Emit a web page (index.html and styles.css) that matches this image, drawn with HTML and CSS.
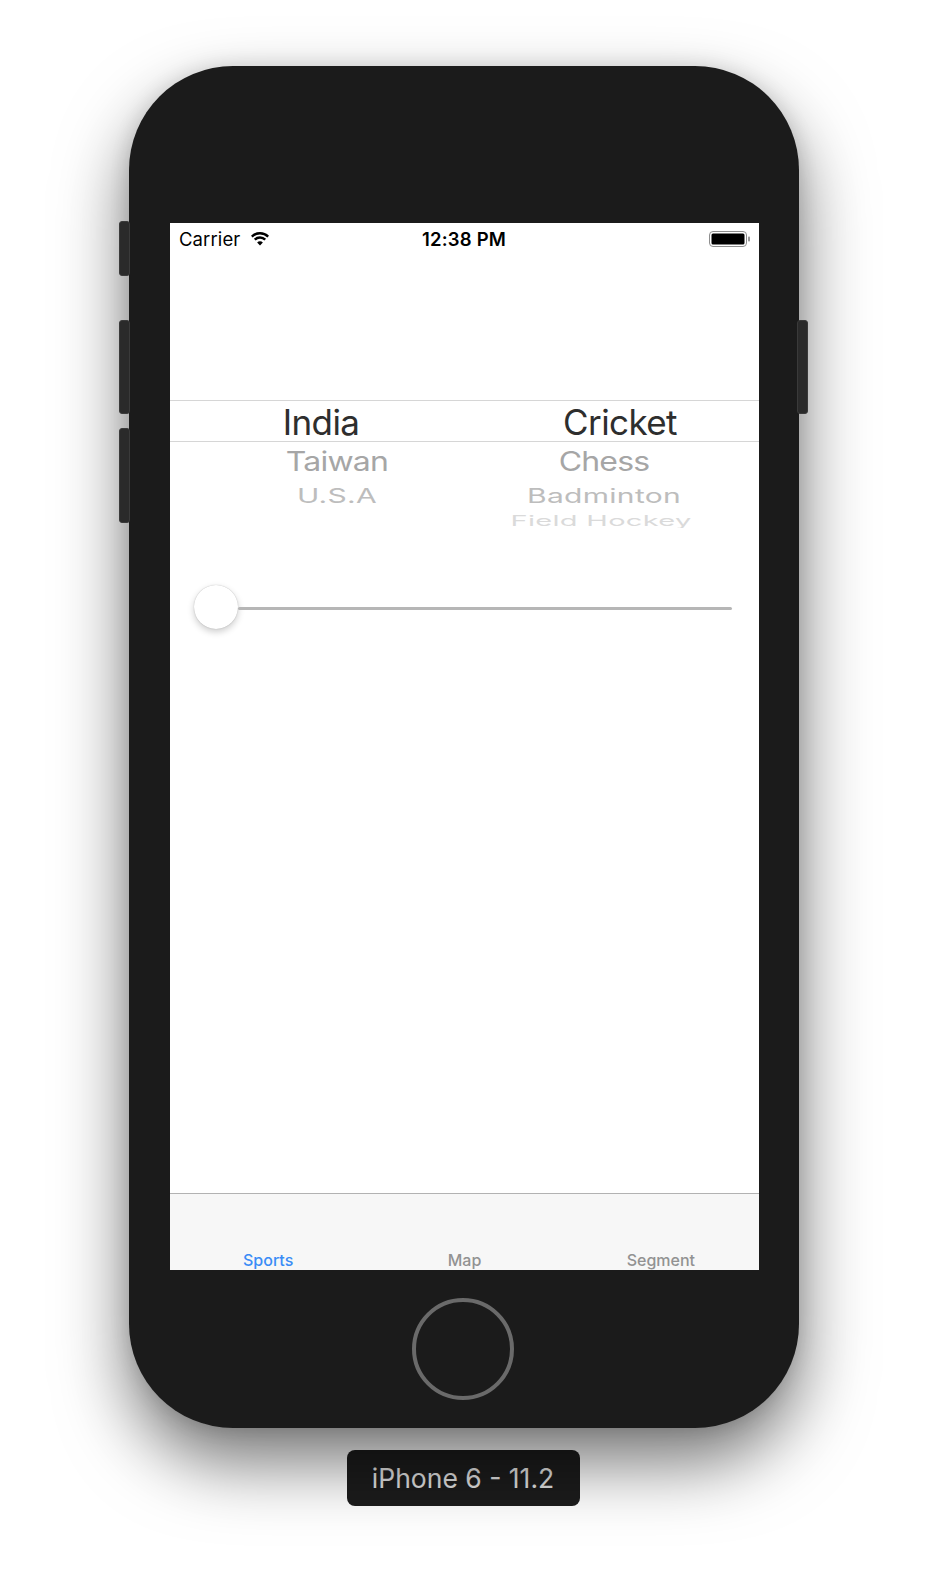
FILE: index.html
```html
<!DOCTYPE html>
<html>
<head>
<meta charset="utf-8">
<title>iPhone 6 - 11.2</title>
<link rel="stylesheet" href="styles.css">
</head>
<body>
<div class="stage">
  <div class="phone">
    <span class="side-btn btn-mute"></span>
    <span class="side-btn btn-vol-up"></span>
    <span class="side-btn btn-vol-down"></span>
    <span class="side-btn btn-power"></span>
    <div class="screen">
      <div class="statusbar">
        <div class="sb-left">
          <span class="carrier">Carrier</span>
          <svg class="wifi" width="18" height="15" viewBox="0 0 34 28">
            <path d="M1.44 10.44 A22 22 0 0 1 32.56 10.44" fill="none" stroke="#000" stroke-width="4.6"/>
            <path d="M7.1 16.1 A14 14 0 0 1 26.9 16.1" fill="none" stroke="#000" stroke-width="4.6"/>
            <path d="M17 27 L11.6 21.6 A7.6 7.6 0 0 1 22.4 21.6 Z" fill="#000"/>
          </svg>
        </div>
        <div class="sb-time">12:38 PM</div>
        <div class="sb-right">
          <svg class="battery" width="42" height="16" viewBox="0 0 42 16">
            <rect x="0.5" y="0.5" width="37" height="15" rx="3.5" fill="none" stroke="#8e8e8e"/>
            <rect x="2.5" y="2.5" width="33" height="11" rx="1.5" fill="#000"/>
            <rect x="39" y="5.5" width="2" height="5" rx="0.8" fill="#9a9a9a"/>
          </svg>
        </div>
      </div>
      <div class="content">
        <div class="picker">
          <div class="picker-band">
            <div class="picker-grid row-sel">
              <div class="cell sel">India</div>
              <div class="cell sel">Cricket</div>
            </div>
          </div>
          <div class="picker-grid row-1">
            <div class="cell dim1 left">Taiwan</div>
            <div class="cell dim1 right">Chess</div>
          </div>
          <div class="picker-grid row-2">
            <div class="cell dim2 left">U.S.A</div>
            <div class="cell dim2 right">Badminton</div>
          </div>
          <div class="picker-grid row-3">
            <div class="cell"></div>
            <div class="cell dim3 right3">Field Hockey</div>
          </div>
        </div>
        <div class="slider">
          <div class="thumb"></div>
          <div class="track"></div>
        </div>
      </div>
      <div class="tabbar">
        <div class="tab active">Sports</div>
        <div class="tab">Map</div>
        <div class="tab">Segment</div>
      </div>
    </div>
    <div class="home-row">
      <div class="home"></div>
    </div>
  </div>
  <div class="device-label">iPhone 6 - 11.2</div>
</div>
</body>
</html>
```

FILE: styles.css
```css
* { box-sizing: border-box; }
html, body { margin: 0; padding: 0; }
body {
  background: #ffffff;
  font-family: "Inter", "Liberation Sans", sans-serif;
  width: 928px;
  height: 1590px;
  overflow: hidden;
}
.stage {
  display: flex;
  flex-direction: column;
  align-items: center;
  padding-top: 66px;
}
.phone {
  position: relative;
  width: 670px;
  height: 1362px;
  background: #1b1b1b;
  border-radius: 104px;
  box-shadow: 0 34px 70px rgba(0, 0, 0, 0.55), 0 0 20px rgba(0,0,0,0.12);
  padding: 157px 40px 0 41px;
  display: flex;
  flex-direction: column;
}
.side-btn {
  position: absolute;
  width: 11px;
  background: #2a2a2a;
  border: 1px solid #3a3a3a;
  border-radius: 3px;
}
.btn-mute { left: -10px; top: 155px; height: 55px; }
.btn-vol-up { left: -10px; top: 254px; height: 94px; }
.btn-vol-down { left: -10px; top: 362px; height: 95px; }
.btn-power { right: -9px; top: 254px; height: 94px; }

.screen {
  width: 589px;
  height: 1047px;
  background: #ffffff;
  display: flex;
  flex-direction: column;
  overflow: hidden;
}
.statusbar {
  height: 32px;
  display: grid;
  grid-template-columns: 1fr auto 1fr;
  align-items: center;
  padding: 0 10px 0 9px;
  color: #000;
}
.sb-left { display: flex; align-items: center; gap: 11px; }
.carrier { font-size: 18.5px; letter-spacing: 0.1px; }
.wifi { display: block; margin-top: -1px; }
.sb-time { font-size: 18.5px; font-weight: 600; text-align: center; letter-spacing: 0.2px; }
.sb-right { display: flex; justify-content: flex-end; }
.battery { display: block; margin-right: -2px; }

.content { flex: 1; display: flex; flex-direction: column; }
.picker { margin-top: 145px; }
.picker-band {
  border-top: 1px solid #d6d6d6;
  border-bottom: 1px solid #d6d6d6;
}
.picker-grid {
  display: grid;
  grid-template-columns: 280px 280px;
  column-gap: 19px;
  padding-left: 11px;
}
.cell {
  display: flex;
  justify-content: center;
  align-items: center;
  white-space: nowrap;
  line-height: 1;
}
.row-sel { height: 40px; }
.row-1 { height: 38px; padding-top: 2px; }
.row-2 { height: 30px; padding-top: 1px; }
.row-3 { height: 18px; overflow: hidden; align-items: start; }

.sel { font-size: 35px; color: #2e2e2e; letter-spacing: -0.6px; padding-top: 2px; }
.dim1 { font-size: 32px; color: #a6a6a6; transform: scaleY(0.84); letter-spacing: -0.8px; }
.dim2 { font-size: 30px; color: #bdbdbd; transform: scaleY(0.66); letter-spacing: 0.3px; }
.dim3 { font-size: 29px; color: #dadada; transform: scaleY(0.5); letter-spacing: 0.3px; margin-top: -4px; }
.left { position: relative; left: 16px; }
.right { position: relative; left: -16px; }
.right3 { position: relative; left: -19px; }

.slider {
  margin-top: 57px;
  display: flex;
  align-items: center;
  padding: 0 27px 0 24px;
}
.thumb {
  width: 44px;
  height: 44px;
  border-radius: 50%;
  background: #fff;
  box-shadow: 0 3px 7px rgba(0,0,0,0.2), 0 0 1px rgba(0,0,0,0.3);
  flex: none;
}
.track {
  flex: 1;
  height: 3px;
  background: #b6b6b6;
  border-radius: 2px;
  margin-top: 2px;
}

.tabbar {
  height: 77px;
  background: #f7f7f7;
  border-top: 1px solid #b2b2b2;
  display: grid;
  grid-template-columns: 1fr 1fr 1fr;
  align-items: end;
  padding-bottom: 1px;
}
.tab {
  text-align: center;
  font-size: 16px;
  font-weight: 500;
  line-height: 18px;
  color: #929292;
}
.tab.active { color: #3a8cf6; }

.home-row {
  flex: 1;
  display: flex;
  justify-content: center;
  padding-top: 28px;
  padding-right: 4px;
}
.home {
  width: 102px;
  height: 102px;
  border-radius: 50%;
  border: 4px solid #6a6a6a;
}

.device-label {
  margin-top: 22px;
  margin-right: 2px;
  width: 233px;
  height: 56px;
  background: #1c1c1c;
  border-radius: 8px;
  color: #e2e2e2;
  font-size: 26.5px;
  display: flex;
  align-items: center;
  justify-content: center;
  box-shadow: 0 0 0 1px rgba(255,255,255,0.12);
}
```
